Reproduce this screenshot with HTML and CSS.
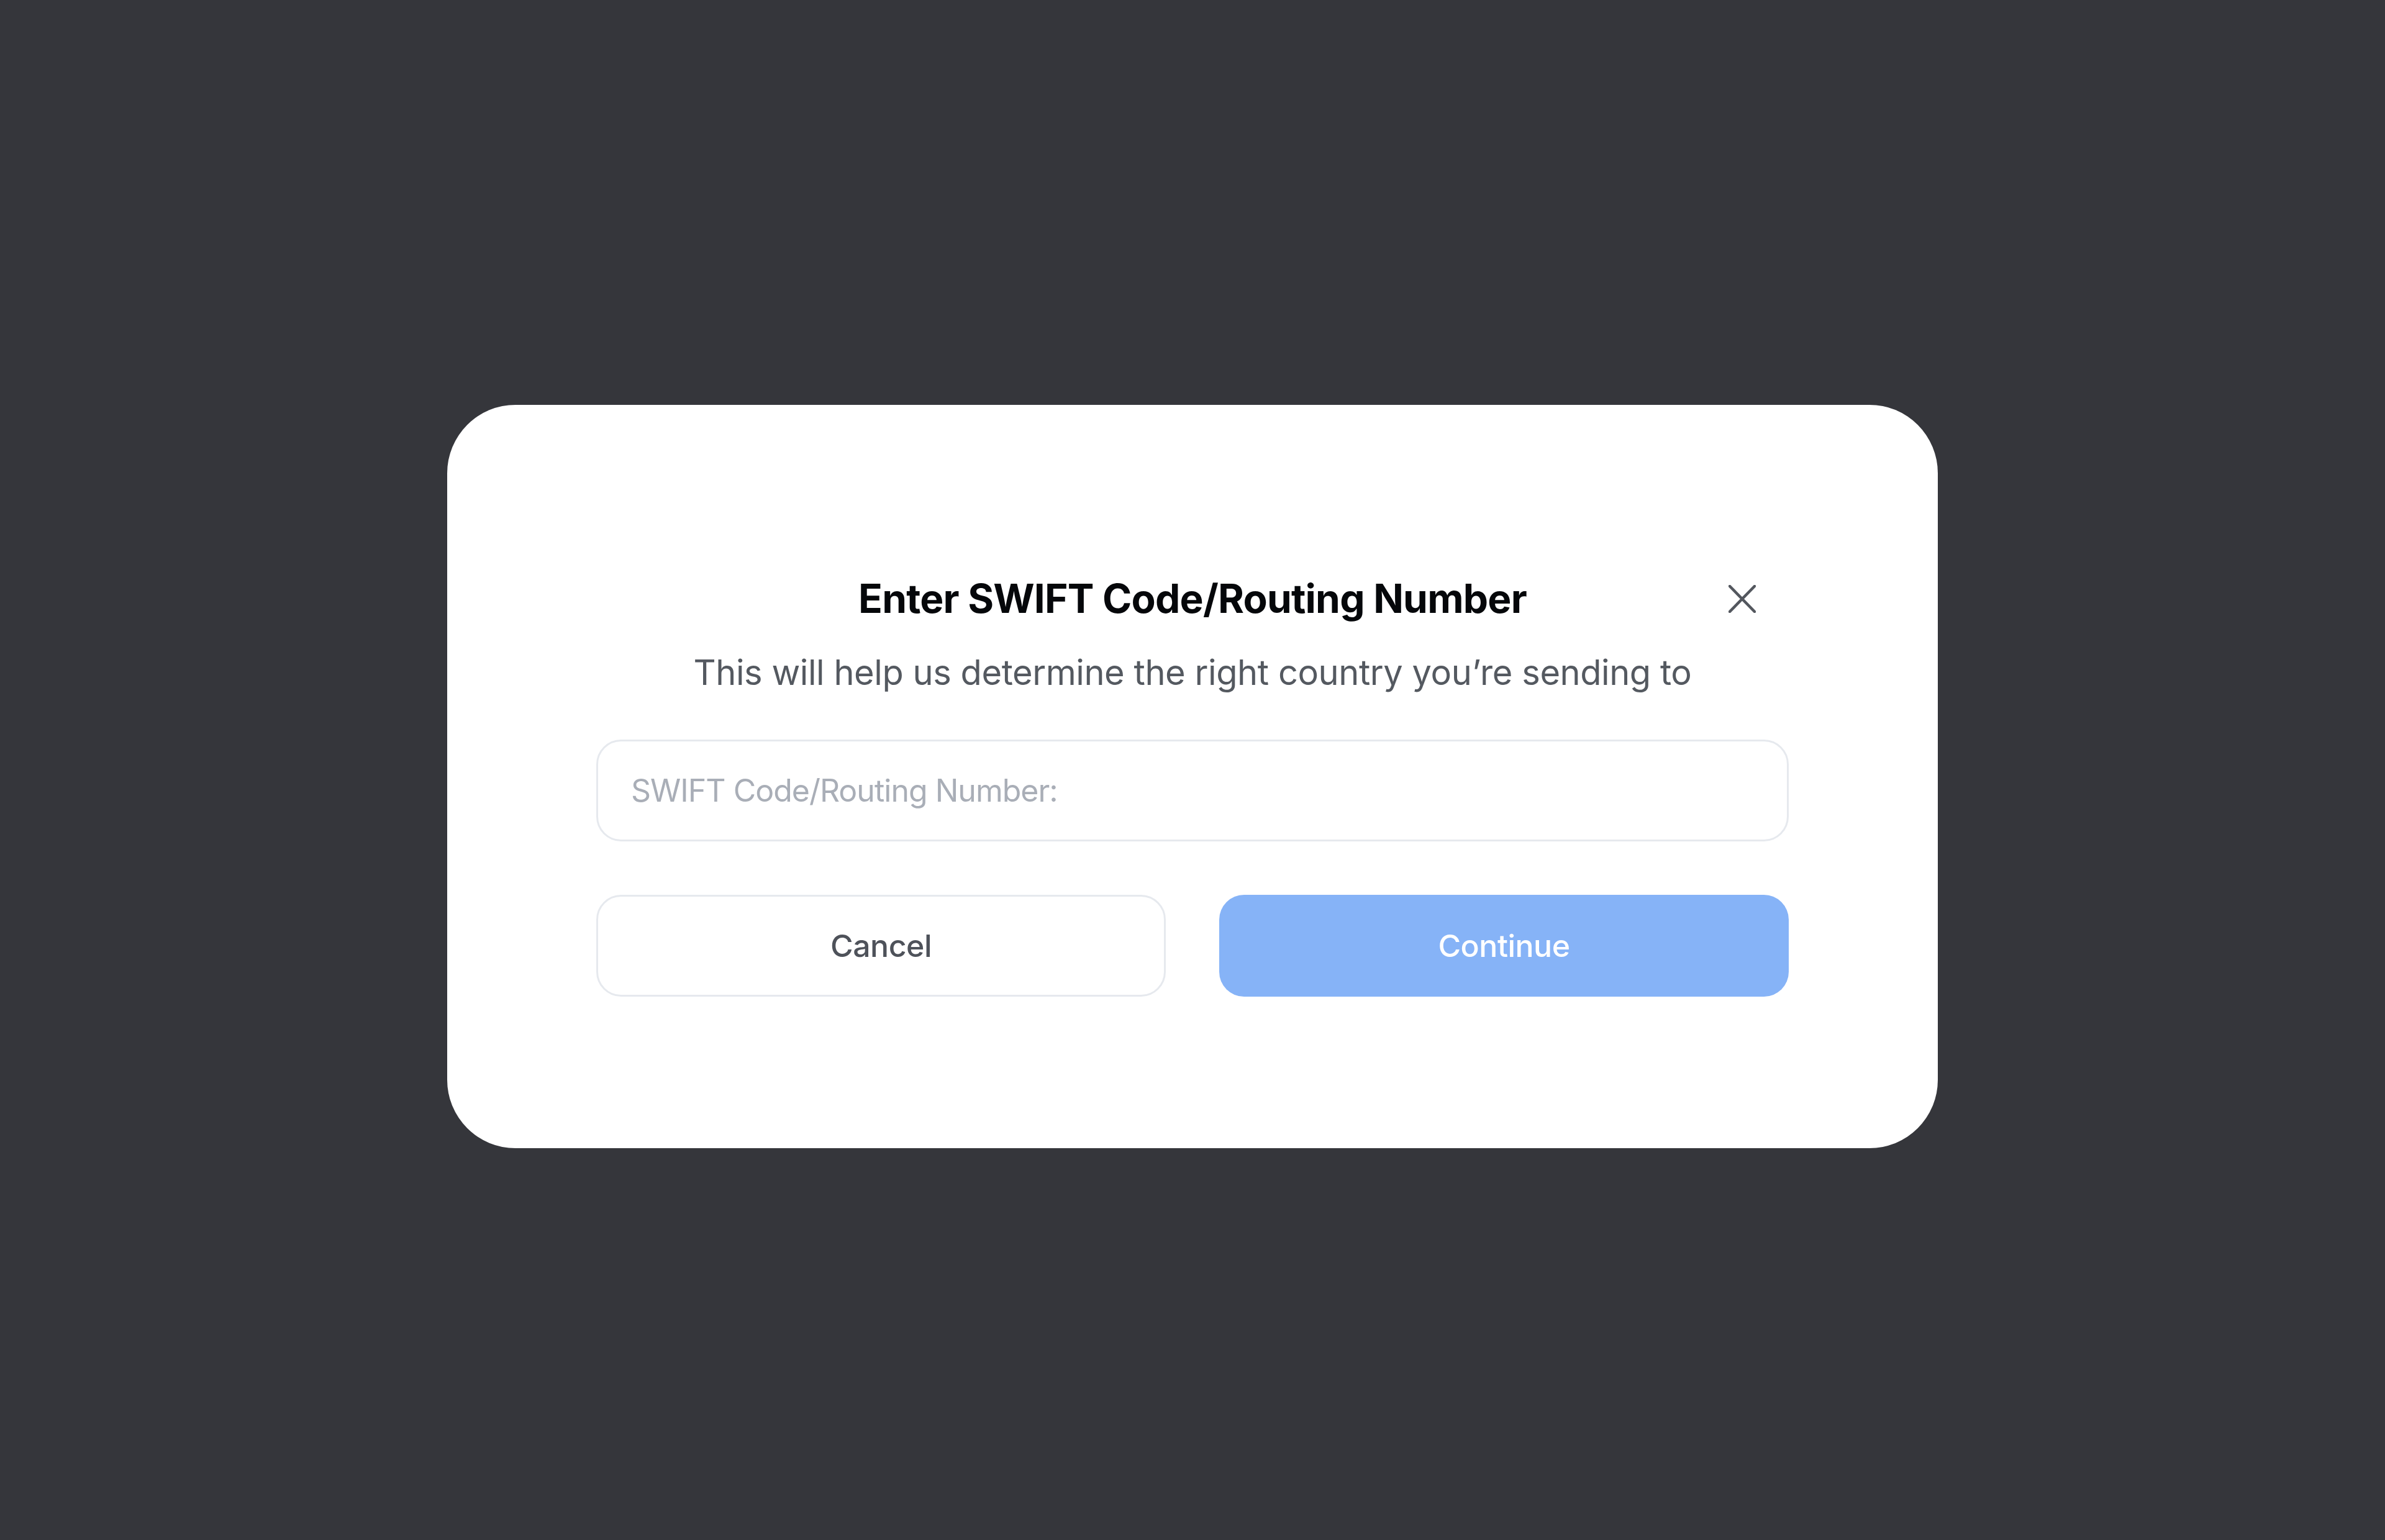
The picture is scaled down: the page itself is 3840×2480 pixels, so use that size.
FILE: index.html
```html
<!DOCTYPE html>
<html lang="en">
<head>
  <meta charset="UTF-8" />
  <meta name="viewport" content="width=device-width, initial-scale=1.0"/>
  <title>Enter SWIFT Code</title>
  <link rel="stylesheet" href="styles.css">
</head>
<body>
  <div class="overlay">
    <div class="modal">
      <div class="modal-head">
        <h2 class="title">Enter SWIFT Code/Routing Number</h2>
        <button class="close" aria-label="Close">
          <svg width="44" height="45" viewBox="0 0 44 45">
            <path d="M2 2 L42 43 M42 2 L2 43" stroke="#53575e" stroke-width="4.5" stroke-linecap="round" fill="none"/>
          </svg>
        </button>
      </div>
      <p class="subtitle">This will help us determine the right country you’re sending to</p>
      <input class="field" type="text" placeholder="SWIFT Code/Routing Number:">
      <div class="actions">
        <button class="btn btn-cancel">Cancel</button>
        <button class="btn btn-continue">Continue</button>
      </div>
    </div>
  </div>
</body>
</html>
```

FILE: styles.css
```css
* {
  box-sizing: border-box;
}

body {
  margin: 0;
  background: #35363b;
  font-family: Inter, "Noto Sans", sans-serif;
}

.overlay {
  min-height: 100vh;
  padding-top: 21px;
  display: flex;
  align-items: center;
  justify-content: center;
}

.modal {
  width: 2400px;
  background: #fff;
  border-radius: 110px;
  padding: 272px 240px 244px;
}

.modal-head {
  display: grid;
  grid-template-columns: 1fr auto 1fr;
  align-items: center;
}

.title {
  grid-column: 2;
  margin: 0;
  font-size: 64px;
  line-height: 80px;
  font-weight: 700;
  color: #05070a;
  letter-spacing: -0.8px;
}

.close {
  grid-column: 3;
  justify-self: end;
  margin-right: 53px;
  padding: 0;
  border: none;
  background: none;
  display: flex;
  cursor: pointer;
}

.subtitle {
  margin: 45px 0 0;
  text-align: center;
  font-size: 56px;
  line-height: 68px;
  color: #545960;
  letter-spacing: -0.45px;
}

.field {
  display: block;
  width: 100%;
  height: 164px;
  margin-top: 74px;
  padding: 0 53px;
  border: 3px solid #e6e9ee;
  border-radius: 40px;
  font-family: inherit;
  font-size: 50px;
  letter-spacing: -1px;
  color: #2b2f35;
  outline: none;
}

.field::placeholder {
  color: #a9aeb7;
}

.actions {
  display: grid;
  grid-template-columns: 1fr 1fr;
  gap: 86px;
  margin-top: 86px;
}

.btn {
  height: 164px;
  padding: 0;
  border-radius: 40px;
  font-family: inherit;
  font-size: 50px;
  font-weight: 500;
  letter-spacing: -0.5px;
  cursor: pointer;
}

.btn-cancel {
  background: #fff;
  border: 3px solid #e6e9ee;
  color: #4e525a;
}

.btn-continue {
  background: #86b3f7;
  border: none;
  color: #fff;
}
```
